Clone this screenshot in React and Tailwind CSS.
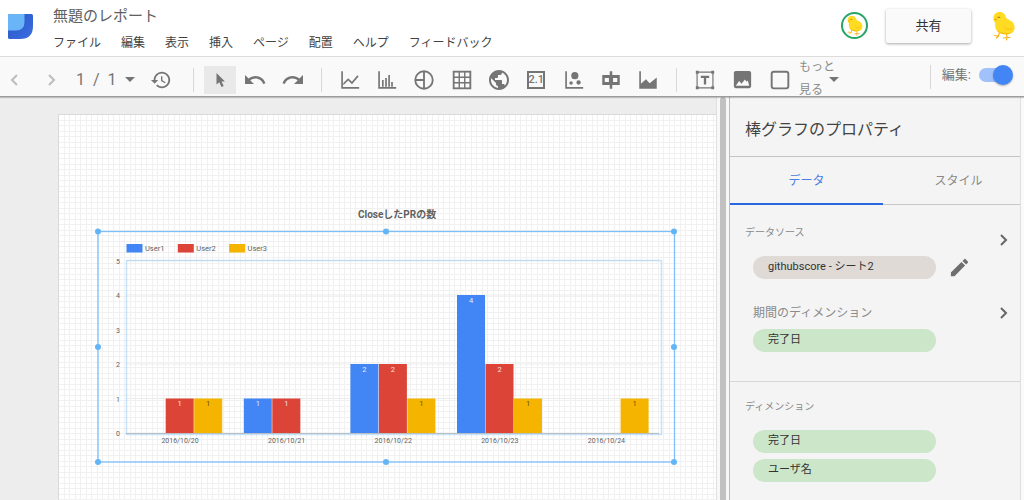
import React from "react";

const MENU = ["ファイル", "編集", "表示", "挿入", "ページ", "配置", "ヘルプ", "フィードバック"];

function Icon({ size = 24, children, label }) {
  return (
    <svg width={size} height={size} viewBox="0 0 24 24" fill="currentColor" role="img" aria-label={label}>
      {children}
    </svg>
  );
}

function Logo() {
  return (
    <svg width="25" height="25" viewBox="0 0 25 25" role="img" aria-label="Logo">
      <defs>
        <linearGradient id="base" x1="0" y1="0" x2="1" y2="1">
          <stop offset="0" stopColor="#2a56c6" />
          <stop offset="1" stopColor="#3b6fe0" />
        </linearGradient>
      </defs>
      <path d="M1.5 0H23.5Q25 0 25 1.5V12Q25 25 12 25H1.5Q0 25 0 23.5V1.5Q0 0 1.5 0Z" fill="url(#base)" />
      <path d="M1.5 0H16.500V8Q16.500 16.500 8 16.500H0V1.5Q0 0 1.5 0Z" fill="#69b5f7" />
    </svg>
  );
}

function Chick({ className }) {
  return (
    <svg viewBox="0 0 24 30" className={className} role="img" aria-label="Chick">
      <g stroke="#f6b21b" strokeWidth="1.2" fill="none" strokeLinecap="round">
        <path d="M7.500 21L6.500 25L2.500 24.500M6.500 25L4.500 27" />
        <path d="M14.500 22.500L15 26.500L11.500 27M15 26.500L14.500 29M15 26.500L18 26.500" />
      </g>
      <path
        d="M1.500 8C1.300 3.500 4 1 7.500 1C11 1 13.500 3 13.800 6.200C15 8.500 19 9 21 11.500C23 14 23.300 18 21.500 20.500C19.500 23.200 15.500 24 12 23.200C8 23 4.500 20.500 3.500 17C3 14.800 3.200 13 3.200 11.800C2 10.800 1.500 9.500 1.500 8Z"
        fill="#ffdb24"
      />
      <path d="M10.500 13C12 17.500 17 18.500 21 16.500C19 20.500 12 20.500 10.500 13Z" fill="#fbc918" />
      <path d="M4.500 18.500C8 22 14 22.700 20.500 21.500C14 24.800 7 23.500 4.500 18.500Z" fill="#f6bd14" />
      <path d="M4.700 7.400L1.800 8.200L4.500 9.500Z" fill="#f09a1b" />
      <path d="M5.500 6.300H8.200" stroke="#8a6a10" strokeWidth=".9" />
    </svg>
  );
}

const CHART_TOOLS = [
  ["期間グラフ", <path key="a" d="M1.500 1.500H3.500V20.500H23V22.500H1.500ZM4 15.500L9.800 9.800L14.300 14.200L20.800 6.400L22.300 7.700L14.400 17.200L9.800 12.700L4 18.300Z" />],
  ["棒グラフ", <path key="a" d="M1.500 1.500H3.500V20.500H23V22.500H1.500ZM6 12H8V20H6ZM9.800 9.500H11.800V20H9.800ZM13.500 6H15.500V20H13.500ZM17 14.500H19V20H17Z" />],
  ["円グラフ", <g key="a" fill="none" stroke="currentColor" strokeWidth="2.200"><circle cx="12" cy="12" r="10.500" /><path d="M12 2V22M2 12H12" /></g>],
  ["表", <g key="a" fill="none" stroke="currentColor"><rect x="2" y="2" width="20" height="20" strokeWidth="2.200" /><path d="M8.700 2V22M15.300 2V22M2 8.700H22M2 15.300H22" strokeWidth="1.700" /></g>],
  ["地図", <path key="a" transform="translate(-2.400 -2.400) scale(1.200)" d="M12 2C6.480 2 2 6.480 2 12s4.480 10 10 10 10-4.480 10-10S17.520 2 12 2zm-1 17.930c-3.950-.49-7-3.850-7-7.930 0-.62.080-1.210.210-1.790L9 15v1c0 1.100.9 2 2 2v1.930zm6.900-2.540c-.26-.81-1-1.390-1.900-1.390h-1v-3c0-.55-.45-1-1-1H8v-2h2c.55 0 1-.45 1-1V7h2c1.100 0 2-.9 2-2v-.41c2.930 1.190 5 4.060 5 7.410 0 2.080-.8 3.970-2.100 5.390z" />],
  ["スコアカード", "score"],
  ["散布図", <g key="a"><path d="M1.500 1.500H3.500V20.500H23V22.500H1.500Z" /><circle cx="13" cy="6.800" r="4.300" /><circle cx="8.500" cy="15.500" r="2.100" /><circle cx="17.500" cy="15" r="2.600" /></g>],
  ["箇条書きグラフ", <path key="a" fillRule="evenodd" d="M10.500 1.500H13.500V6H22.500V18H13.500V22.500H10.500V18H1.500V6H10.500ZM4.500 9.500V14.500H9.500V9.500ZM14.500 9.500V14.500H19.500V9.500Z" />],
  ["面グラフ", <path key="a" d="M1.500 1.500H3.500V16.500L9.500 11L14 16L22.500 9V22.500H1.500Z" />],
];

function ScoreIcon() {
  return (
    <span className="flex h-[18px] w-[18px] items-center justify-center border-2 border-[#757575] text-[11px] leading-3 font-medium">
      2.1
    </span>
  );
}

function Tool({ label, children }) {
  return (
    <button type="button" aria-label={label} className="flex h-7 items-center justify-center">
      {children}
    </button>
  );
}

const Divider = () => <span className="h-6 w-px shrink-0 bg-[#d8d8d8]" />;
const Caret = () => <svg width="10" height="5" viewBox="0 0 10 5" fill="#757575" aria-hidden="true"><path d="M0 0H10L5 5Z" /></svg>;
const Chevron = ({ flip, width = 2 }) => (
  <svg width="8" height="12" viewBox="0 0 8 12" fill="none" stroke="currentColor" strokeWidth={width} aria-hidden="true">
    <path d={flip ? "M7 1L2 6L7 11" : "M1 1L6 6L1 11"} />
  </svg>
);
const UNDO = "M12.500 8c-2.650 0-5.050.99-6.900 2.600L2 7v9h9l-3.620-3.620c1.390-1.160 3.160-1.880 5.120-1.880 3.540 0 6.550 2.310 7.600 5.500l2.370-.78C21.080 11.030 17.150 8 12.500 8z";

function Toolbar() {
  return (
    <div className="relative z-10 flex h-10 shrink-0 border-b border-[#9c9c9c] bg-[#f9f9f9] text-[#757575] shadow-[0_1px_1px_rgba(0,0,0,0.2)]">
      <div className="flex shrink-0 items-center pt-1.5">
        <div className="flex w-[193px] shrink-0 items-center">
          <button type="button" aria-label="前のページ" className="flex h-7 w-7 items-center justify-center text-[#bdbdbd]"><Chevron flip /></button>
          <button type="button" aria-label="次のページ" className="ml-2 flex h-7 w-8 items-center justify-center text-[#bdbdbd]"><Chevron /></button>
          <button type="button" className="ml-2 flex items-center gap-2 text-base">
            <span>1</span><span>/</span><span>1</span><Caret />
          </button>
          <button type="button" aria-label="変更履歴" className="ml-3 flex h-7 w-7 items-center justify-center">
            <Icon size={22}><path d="M13 3c-4.970 0-9 4.030-9 9H1l3.890 3.890.07.14L9 12H6c0-3.870 3.130-7 7-7s7 3.130 7 7-3.130 7-7 7c-1.930 0-3.680-.79-4.940-2.060l-1.420 1.420C8.270 19.990 10.510 21 13 21c4.970 0 9-4.030 9-9s-4.030-9-9-9zm-1 5v5l4.280 2.540.72-1.210-3.500-2.080V8H12z" /></Icon>
          </button>
        </div>
        <Divider />
        <div className="flex w-[127px] shrink-0 items-center pl-[10px]">
          <button type="button" aria-label="選択" aria-pressed="true" className="flex h-7 w-8 items-center justify-center bg-[#e9e9e9]">
            <svg width="9" height="14" viewBox="0 0 9 14" fill="currentColor" aria-hidden="true"><path d="M.5 0L9 8.500H5.500L7.700 12.900L5.500 14L3.300 9.300L.5 11.500Z" /></svg>
          </button>
          <button type="button" aria-label="元に戻す" className="flex h-7 w-[38px] items-center justify-center"><Icon><path d={UNDO} /></Icon></button>
          <button type="button" aria-label="やり直す" className="flex h-7 w-[38px] items-center justify-center"><Icon><path transform="translate(24 0) scale(-1 1)" d={UNDO} /></Icon></button>
        </div>
        <Divider />
        <div className="grid w-[354px] shrink-0 grid-cols-9 px-[9px]">
          {CHART_TOOLS.map(([label, art]) => (
            <Tool key={label} label={label}>{art === "score" ? <ScoreIcon /> : <Icon size={20}>{art}</Icon>}</Tool>
          ))}
        </div>
        <Divider />
        <div className="grid w-[122px] shrink-0 grid-cols-3 pl-[9px]">
          <Tool label="テキスト">
            <Icon size={20}>
              <path d="M2.500 2.500H21.500V21.500H2.500Z" fill="none" stroke="currentColor" strokeWidth="1.400" />
              <path d="M1 1H4.500V4.500H1ZM19.500 1H23V4.500H19.500ZM1 19.500H4.500V23H1ZM19.500 19.500H23V23H19.500ZM7 7H17V9.500H13.400V17.500H10.600V9.500H7Z" />
            </Icon>
          </Tool>
          <Tool label="画像"><Icon size={23}><path d="M21 19V5c0-1.100-.9-2-2-2H5c-1.100 0-2 .9-2 2v14c0 1.100.9 2 2 2h14c1.100 0 2-.9 2-2zM5 18.500L8.500 13.500l2.500 3 3.500-4.500 1.700 2.300 1.300-1.200L19 18.500z" /></Icon></Tool>
          <Tool label="長方形"><Icon size={20}><rect x="2" y="2" width="20" height="20" rx="2.500" fill="none" stroke="currentColor" strokeWidth="2.300" /></Icon></Tool>
        </div>
      </div>
      <button type="button" className="flex h-10 w-10 shrink-0 items-center pt-1 text-left text-xs leading-[23px] text-[#8a8a8a]">
        <span className="w-9 shrink-0">もっと見る</span>
        <span className="-ml-1.5"><Caret /></span>
      </button>
      <div className="ml-auto flex h-full items-start pt-2 pr-[11px]">
        <Divider />
        <label htmlFor="edit" className="pl-[11px] text-[13px] leading-5">編集:</label>
        <span className="relative ml-2 flex h-5 w-[34px] items-center">
          <input id="edit" type="checkbox" role="switch" defaultChecked className="peer h-[14px] w-8 appearance-none rounded-full bg-[#a0c1fb]" />
          <span className="pointer-events-none absolute right-0 h-5 w-5 rounded-full bg-[#4286f5] shadow-[0_1px_2px_rgba(0,0,0,0.3)]" />
        </span>
      </div>
    </div>
  );
}

const SERIES = [
  { name: "User1", fill: "#4285f4", text: "#e3edfd", values: [0, 1, 2, 4, 0] },
  { name: "User2", fill: "#db4437", text: "#fbe3e1", values: [1, 1, 2, 2, 0] },
  { name: "User3", fill: "#f4b400", text: "#6b5310", values: [1, 0, 1, 1, 1] },
];
const DAYS = ["2016/10/20", "2016/10/21", "2016/10/22", "2016/10/23", "2016/10/24"];
const BASE = 205;
const STEP = 34.5;
const center = (day) => 86 + day * 106.6;

function Chart() {
  return (
    <svg width="584" height="238" viewBox="0 0 584 238" className="block" role="img" aria-label="CloseしたPRの数">
      <g fontSize="7" fill="#616161">
        {[0, 1, 2, 3, 4, 5].map((n) => (
          <g key={n}>
            <path d={`M32 ${BASE - n * STEP}H565`} stroke="#ececec" strokeWidth="1" />
            <text x="26" y={BASE - n * STEP + 3} textAnchor="end">{n}</text>
          </g>
        ))}
        {SERIES.map((s, i) => (
          <g key={s.name}>
            <rect x={32.5 + i * 51.3} y="16" width="16" height="8.500" fill={s.fill} rx=".5" />
            <text x={51 + i * 51.3} y="23" fontSize="7.500">{s.name}</text>
          </g>
        ))}
        {DAYS.map((d, i) => (
          <text key={d} x={center(i)} y="215" textAnchor="middle">{d}</text>
        ))}
      </g>
      {SERIES.map((s, i) =>
        s.values.map((v, day) =>
          v ? (
            <g key={`${s.name}${day}`}>
              <rect x={center(day) - 42.8 + i * 28.5} y={BASE - v * STEP} width="28" height={v * STEP} fill={s.fill} />
              <text x={center(day) - 28.8 + i * 28.5} y={BASE - v * STEP + 7.5} fontSize="7.500" fill={s.text} textAnchor="middle">{v}</text>
            </g>
          ) : null
        )
      )}
      <path d="M32 205.500H565" stroke="#bdbdbd" />
      <rect x="32.500" y="32.500" width="535" height="174" fill="none" stroke="#90caf9" strokeDasharray="1 1" strokeWidth="1.500" />
      <rect x="4" y="3.500" width="576.500" height="230.500" fill="none" stroke="#7dbff8" strokeWidth="1.300" />
      <g fill="#64b5f6">
        {[[4, 3.5], [292, 3.5], [580, 3.5], [4, 119], [580, 119], [4, 234], [292, 234], [580, 234]].map(([x, y]) => (
          <circle key={`${x}-${y}`} cx={x} cy={y} r="3" />
        ))}
      </g>
    </svg>
  );
}

function Pill({ children, tone = "bg-[#cbe6c9]" }) {
  return <button type="button" className={`flex h-[23px] w-[183px] items-center rounded-full pl-[15px] text-[11px] text-[#333] ${tone}`}>{children}</button>;
}

function Properties() {
  return (
    <aside className="flex w-[295px] shrink-0 border-l border-[#bdbdbd] bg-[#fafafa]">
      <div className="w-[291px] shrink-0 border-r border-[#e0e0e0] bg-[#f4f4f4]">
        <h2 className="flex h-[60px] items-center border-b border-[#c4c4c4] pt-1.5 pl-[15px] text-base text-[#424242]">棒グラフのプロパティ</h2>
        <div role="tablist" className="flex h-12 border-b border-[#c8c8c8] text-xs text-[#8a8a8a]">
          <button type="button" role="tab" aria-selected="true" className="-mb-px w-[153px] border-b-2 border-[#2a66dd] pt-0.5 text-[#4a7fe5]">データ</button>
          <button type="button" role="tab" aria-selected="false" className="flex-1 pl-3.5">スタイル</button>
        </div>
        <section className="h-[177px] border-b border-[#d8d8d8] pt-5 pr-3 pl-[15px] text-[#8a8a8a]">
          <div className="flex items-center justify-between">
            <div>
              <h3 className="text-[10px] leading-4">データソース</h3>
              <div className="mt-[15px] flex items-center gap-3 pl-2">
                <Pill tone="bg-[#dfdad6]">githubscore - シート2</Pill>
                <button type="button" aria-label="編集" className="-my-1 text-[#6e6e6e]">
                  <Icon size={23}><path d="M3 17.250V21h3.750L17.810 9.940l-3.750-3.750L3 17.250zM20.710 7.040c.39-.39.39-1.020 0-1.410l-2.340-2.340c-.39-.39-1.020-.39-1.410 0l-1.830 1.830 3.750 3.750 1.830-1.830z" /></Icon>
                </button>
              </div>
            </div>
            <button type="button" aria-label="データソースを選択" className="mb-6 text-[#666]"><Chevron /></button>
          </div>
          <div className="mt-6 flex items-center justify-between pl-2">
            <h3 className="text-xs leading-5">期間のディメンション</h3>
            <button type="button" aria-label="期間を選択" className="text-[#666]"><Chevron /></button>
          </div>
          <div className="mt-1.5 pl-2"><Pill>完了日</Pill></div>
        </section>
        <section className="pt-[17px] pl-[15px] text-[#8a8a8a]">
          <h3 className="text-[10px] leading-4">ディメンション</h3>
          <div className="mt-[15px] flex flex-col gap-1.5 pl-2">
            <Pill>完了日</Pill>
            <Pill>ユーザ名</Pill>
          </div>
        </section>
      </div>
    </aside>
  );
}

export default function App() {
  return (
    <div className="flex h-screen flex-col overflow-hidden bg-white font-[Roboto,'Noto_Sans_CJK_JP',sans-serif]">
      <header className="flex h-[57px] shrink-0 items-start border-b border-[#dcdcdc] pr-[7px] pl-2">
        <div className="pt-[14px]"><Logo /></div>
        <div className="pl-5">
          <h1 className="pt-1.5 text-[15px] leading-5 text-[#616161]">無題のレポート</h1>
          <nav className="mt-[9px] flex gap-5 text-xs leading-4 text-[#424242]">
            {MENU.map((m) => <button type="button" key={m}>{m}</button>)}
          </nav>
        </div>
        <div className="ml-auto flex items-start">
          <div className="mt-3 flex h-[27px] w-[27px] items-center justify-center rounded-full border-2 border-[#27a566]"><Chick className="h-[21px] w-[18px]" /></div>
          <button type="button" className="mt-[9px] ml-[18px] h-[34px] w-[85px] rounded-xs bg-[#fafafa] text-[13px] text-[#333] shadow-[0_1px_3px_rgba(0,0,0,0.35)]">共有</button>
          <Chick className="mt-[11px] ml-5 h-[30px] w-[26px]" />
        </div>
      </header>
      <Toolbar />
      <div className="flex min-h-0 flex-1">
        <main className="flex min-w-0 flex-1 overflow-hidden bg-[#ededed] pt-[17px] pl-[58px]">
          <div className="relative min-w-0 flex-1 border-t border-l border-[#dadada] bg-white bg-[linear-gradient(to_right,transparent_5px,#f1f1f1_5px,#f1f1f1_6px,transparent_6px,transparent_10px,#f1f1f1_10px),linear-gradient(to_bottom,transparent_5px,#f1f1f1_5px,#f1f1f1_6px,transparent_6px,transparent_10px,#f1f1f1_10px)] bg-size-[11px_11px]">
            <h2 className="absolute top-[94px] left-[299px] text-[10px] leading-3 font-bold whitespace-nowrap text-[#616161]">CloseしたPRの数</h2>
            <div className="absolute top-[113px] left-[35px]"><Chart /></div>
          </div>
        </main>
        <div className="w-[13px] shrink-0 border-l border-[#e0e0e0] bg-[#f8f8f8] px-[3px]">
          <div className="h-full rounded-t-full bg-[#c1c1c1]" />
        </div>
        <Properties />
      </div>
    </div>
  );
}
